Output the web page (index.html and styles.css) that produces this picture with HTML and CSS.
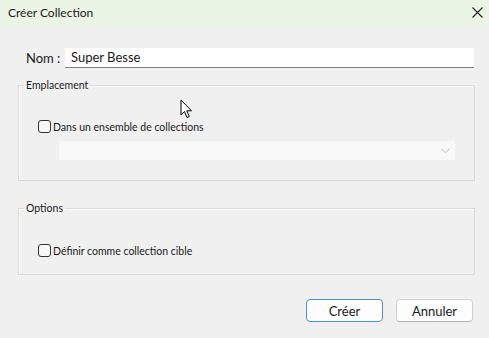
FILE: index.html
```html
<!DOCTYPE html>
<html>
<head>
<meta charset="utf-8">
<link rel="stylesheet" href="styles.css">
</head>
<body>
	<div class="titlebar">
		<span class="title">Créer Collection</span>
		<svg class="close" width="11" height="11" viewBox="0 0 11 11"><path d="M0.5 0.5 L10.5 10.5 M10.5 0.5 L0.5 10.5" stroke="#222" stroke-width="1.1"/></svg>
	</div>

	<div class="content">
		<div class="name-row">
			<label class="name-label">Nom :</label>
			<div class="name-input">Super Besse</div>
		</div>

		<fieldset class="group">
			<legend>Emplacement</legend>
			<div class="check-row first">
				<span class="box"></span>
				<span>Dans un ensemble de collections</span>
			</div>
			<div class="combo">
				<svg width="9" height="6" viewBox="0 0 9 6"><path d="M0.5 0.8 L4.5 4.8 L8.5 0.8" fill="none" stroke="#b8b8b8" stroke-width="1"/></svg>
			</div>
		</fieldset>

		<fieldset class="group options">
			<legend>Options</legend>
			<div class="check-row">
				<span class="box"></span>
				<span>Définir comme collection cible</span>
			</div>
		</fieldset>

		<div class="buttons">
			<div class="btn default">Créer</div>
			<div class="btn">Annuler</div>
		</div>
	</div>

	<svg class="cursor" width="13" height="20" viewBox="0 0 13 20"><path d="M1 1 L1 16 L4.5 12.5 L7 18.5 L9.3 17.5 L6.8 11.8 L11.5 11.8 Z" fill="#fff" stroke="#000" stroke-width="1" stroke-linejoin="round"/></svg>
</body>
</html>
```

FILE: styles.css
```css
* {
  box-sizing: border-box;
}

body {
  margin: 0;
  width: 489px;
  height: 338px;
  background: #f0f0f0;
  font-family: Lato, "Noto Sans", sans-serif;
  font-size: 12px;
  color: #1a1a1a;
  position: relative;
  overflow: hidden;
}

.titlebar {
  height: 27px;
  background: #ebf5e5;
  display: flex;
  align-items: center;
  justify-content: space-between;
  padding: 0 6px 0 8px;
}

.title {
  margin-top: -3px;
}

.close {
  margin-top: -3px;
}

.content {
  padding: 21px 15px 0 18px;
}

.name-row {
  display: flex;
  align-items: center;
  height: 20px;
}

.name-label {
  width: 47px;
  padding-left: 8px;
  font-size: 13px;
}

.name-input {
  flex: 1;
  height: 20px;
  background: #fff;
  border-bottom: 1px solid #808080;
  padding: 1px 0 0 6px;
  font-size: 13px;
}

.group {
  margin: 10px 0 0 0;
  width: 457px;
  padding: 0 19px 20px 19px;
  border: 1px solid #dadada;
  box-shadow: inset 1px 1px #fbfbfb;
  font-size: 10.5px;
}

.group legend {
  padding: 0 2px;
  margin-left: -14px;
  line-height: 14px;
  height: 14px;
}

.check-row {
  display: flex;
  align-items: center;
  gap: 2px;
  height: 13px;
  margin-top: 28px;
}

.box {
  width: 13px;
  height: 13px;
  border: 1px solid #333;
  border-radius: 3px;
  background: #f7f7f7;
}

.combo {
  margin: 8px 0 0 21px;
  height: 19px;
  background: #f9f9f9;
  display: flex;
  align-items: center;
  justify-content: flex-end;
  padding-right: 5px;
}

.options {
  margin-top: 20px;
  padding-bottom: 17px;
}

.options .check-row {
  margin-top: 29px;
}

.buttons {
  display: flex;
  justify-content: flex-end;
  gap: 13px;
  margin-top: 24px;
  padding-right: 1px;
}

.btn {
  width: 77px;
  height: 23px;
  border: 1px solid #d0d0d0;
  border-bottom-color: #b5b5b5;
  border-radius: 4px;
  background: #fdfdfd;
  display: flex;
  align-items: center;
  justify-content: center;
  font-size: 13px;
}

.btn.default {
  border: 1px solid #4e91c9;
}

.cursor {
  position: absolute;
  left: 180px;
  top: 99px;
}
```
